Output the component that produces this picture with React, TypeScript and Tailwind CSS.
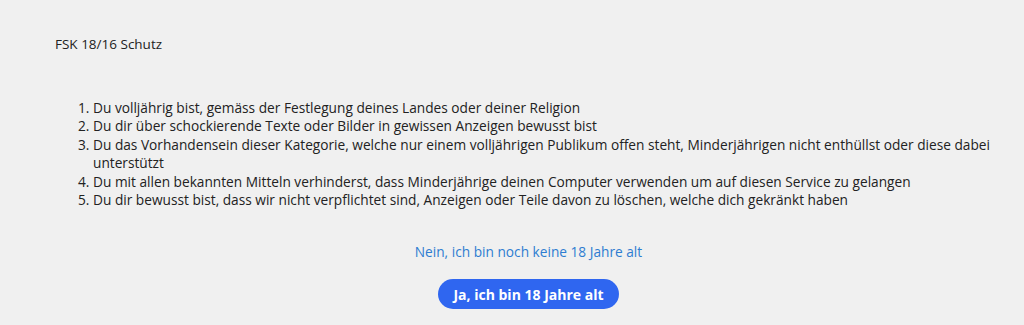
const items = [
  "Du volljährig bist, gemäss der Festlegung deines Landes oder deiner Religion",
  "Du dir über schockierende Texte oder Bilder in gewissen Anzeigen bewusst bist",
  "Du das Vorhandensein dieser Kategorie, welche nur einem volljährigen Publikum offen steht, Minderjährigen nicht enthüllst oder diese dabei unterstützt",
  "Du mit allen bekannten Mitteln verhinderst, dass Minderjährige deinen Computer verwenden um auf diesen Service zu gelangen",
  "Du dir bewusst bist, dass wir nicht verpflichtet sind, Anzeigen oder Teile davon zu löschen, welche dich gekränkt haben",
];

export default function App() {
  return (
    <div className="min-h-[325px] w-full bg-[#f0f0f0] font-['Open_Sans',sans-serif] text-[#222]">
      <div className="pl-[55px] pr-[22px] pt-[35px]">
        <h1 className="text-[13.5px] leading-[18px]">FSK 18/16 Schutz</h1>
        <ol className="mt-[46px] list-decimal pl-[38px] text-[13.7px] leading-[18.4px]">
          {items.map((t) => (
            <li key={t}>{t}</li>
          ))}
        </ol>
        <div className="mt-[34px] flex flex-col items-center">
          <a href="#" className="text-[13.7px] leading-[18px] text-[#2e7dd1]">
            Nein, ich bin noch keine 18 Jahre alt
          </a>
          <button className="mt-[18px] h-[30px] rounded-full bg-[#2f66f0] px-[15px] text-[14px] font-bold text-white">
            Ja, ich bin 18 Jahre alt
          </button>
        </div>
      </div>
    </div>
  );
}
